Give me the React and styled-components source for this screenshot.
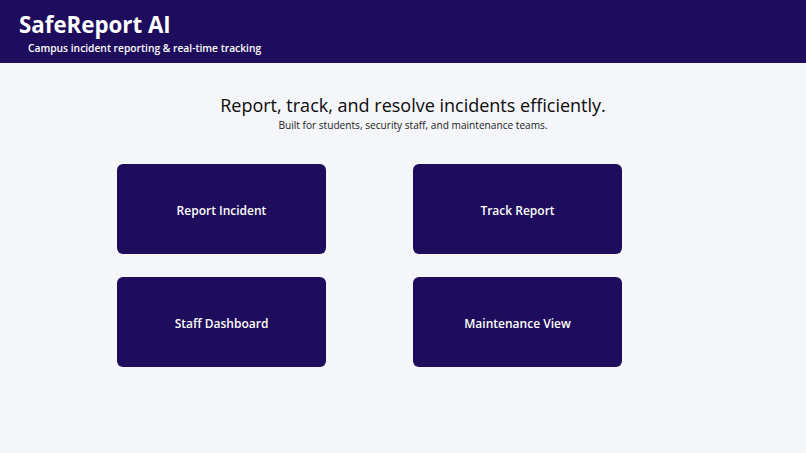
import styled, { createGlobalStyle } from "styled-components";

const Global = createGlobalStyle`
  body {
    margin: 0;
    background: #f5f6fa;
    font-family: "Open Sans", "Noto Sans", sans-serif;
  }
`;

const Header = styled.header`
  background: #1e0d5c;
  color: #fff;
  height: 63px;
  padding: 10px 19px 0;
  box-sizing: border-box;
`;

const Brand = styled.h1`
  margin: 0;
  font-size: 22.3px;
  font-weight: 700;
  line-height: 30px;
`;

const Tagline = styled.p`
  margin: 1px 0 0 9px;
  font-size: 10.25px;
  font-weight: 600;
  line-height: 14px;
`;

const Main = styled.main`
  padding: 30px 0 0 20px;
  display: flex;
  flex-direction: column;
  align-items: center;
`;

const Headline = styled.h2`
  margin: 0;
  font-size: 18px;
  font-weight: 500;
  line-height: 24px;
  color: #0a0a0a;
`;

const Sub = styled.p`
  margin: 1px 0 0;
  font-size: 10.15px;
  line-height: 14px;
  color: #1a1a1a;
`;

const Grid = styled.div`
  margin-top: 32px;
  width: 592px;
  display: grid;
  grid-template-columns: 1fr 1fr;
  row-gap: 23px;
`;

const Card = styled.button`
  width: 209px;
  height: 90px;
  padding: 2px 0 0;
  border: none;
  border-radius: 6px;
  background: #1e0d5c;
  color: #fff;
  font-family: inherit;
  font-size: 12px;
  font-weight: 600;
  cursor: pointer;
`;

const items = ["Report Incident", "Track Report", "Staff Dashboard", "Maintenance View"];

export default function App() {
  return (
    <>
      <Global />
      <Header>
        <Brand>SafeReport AI</Brand>
        <Tagline>Campus incident reporting &amp; real-time tracking</Tagline>
      </Header>
      <Main>
        <Headline>Report, track, and resolve incidents efficiently.</Headline>
        <Sub>Built for students, security staff, and maintenance teams.</Sub>
        <Grid>
          {items.map((t) => (
            <div key={t}>
              <Card>{t}</Card>
            </div>
          ))}
        </Grid>
      </Main>
    </>
  );
}
